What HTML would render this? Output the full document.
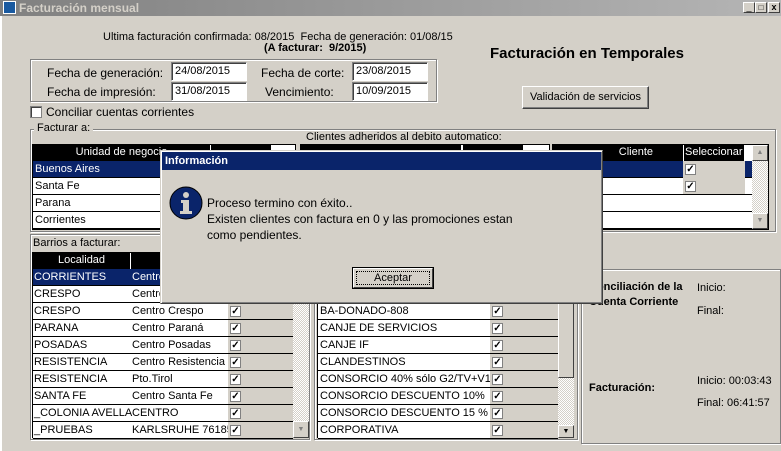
<!DOCTYPE html>
<html><head><meta charset="utf-8"><style>
*{box-sizing:border-box;margin:0;padding:0}
body{width:781px;height:451px;overflow:hidden;background:#d4d0c8;font-family:"Liberation Sans",sans-serif;font-size:11px;color:#000;position:relative}
.a{position:absolute;white-space:nowrap}
.in{background:#fff;border:1px solid;border-color:#808080 #fff #fff #808080;box-shadow:inset 1px 1px 0 #404040;padding:2px 0 0 3px;height:19px;font-size:11px}
.grp{position:absolute;border:1px solid #808080;box-shadow:1px 1px 0 #fff,inset 1px 1px 0 #fff}
.row{position:absolute;height:17px;border-bottom:1px solid #000;background:#fff;font-size:11px;line-height:16px;overflow:hidden}
.sel{background:#0a246a;color:#fff}
.cb{position:absolute;width:11px;height:11px;background:#fff;border:1px solid #808080;font-size:10px;line-height:9px;text-align:center;font-weight:bold}
.sb{position:absolute;background:repeating-conic-gradient(#d4d0c8 0 25%,#fff 0 50%) 0 0/2px 2px}
.btn{position:absolute;border:1px solid;border-color:#fff #404040 #404040 #fff;background:#d4d0c8;text-align:center}
.hd{position:absolute;background:#000;color:#fff;height:16px;line-height:15px;text-align:center}
</style></head><body>
<!-- title bar -->
<div class="a" style="left:0;top:0;width:781px;height:16px;background:linear-gradient(90deg,#808080,#b5b5b5)"></div>
<div class="a" style="left:3px;top:1px;width:13px;height:13px;background:#1a5aa0;border:1px solid #fff"></div>
<div class="a" style="left:19px;top:1px;color:#d4d0c8;font-weight:bold;font-size:12px">Facturación mensual</div>
<div class="btn" style="left:743px;top:2px;width:12px;height:11px;font-size:9px;line-height:8px">_</div>
<div class="btn" style="left:755px;top:2px;width:12px;height:11px;font-size:8px;line-height:9px">□</div>
<div class="btn" style="left:768px;top:2px;width:12px;height:11px;font-size:9px;line-height:9px;font-weight:bold">x</div>
<div class="a" style="left:0;top:16px;width:2px;height:435px;background:#fff"></div>

<div class="a" style="left:103px;top:31px;font-size:11px">Ultima facturación confirmada: 08/2015 &nbsp;Fecha de generación: 01/08/15</div>
<div class="a" style="left:264px;top:42px;font-size:11px;font-weight:bold">(A facturar: &nbsp;9/2015)</div>
<div class="a" style="left:490px;top:45px;font-size:15px;font-weight:bold">Facturación en Temporales</div>

<div class="grp" style="left:30px;top:59px;width:407px;height:43px"></div>
<div class="a" style="left:47px;top:66px;font-size:12px">Fecha de generación:</div>
<div class="a" style="left:47px;top:85px;font-size:12px">Fecha de impresión:</div>
<div class="a" style="left:261px;top:66px;font-size:12px">Fecha de corte:</div>
<div class="a" style="left:265px;top:85px;font-size:12px">Vencimiento:</div>
<div class="a in" style="left:171px;top:62px;width:76px">24/08/2015</div>
<div class="a in" style="left:171px;top:82px;width:76px">31/08/2015</div>
<div class="a in" style="left:352px;top:62px;width:76px">23/08/2015</div>
<div class="a in" style="left:352px;top:82px;width:76px">10/09/2015</div>
<div class="btn" style="left:522px;top:86px;width:127px;height:23px;line-height:21px;font-size:11px;box-shadow:inset -1px -1px 0 #808080">Validación de servicios</div>

<div class="a" style="left:30px;top:106px;width:12px;height:12px;background:#fff;border:1px solid #808080;box-shadow:inset 1px 1px 0 #404040"></div>
<div class="a" style="left:46px;top:105px;font-size:12px">Conciliar cuentas corrientes</div>

<div class="grp" style="left:30px;top:129px;width:746px;height:103px"></div>
<div class="a" style="left:34px;top:122px;background:#d4d0c8;padding:0 3px;font-size:11px">Facturar a:</div>
<div class="a" style="left:306px;top:131px;font-size:11px">Clientes adheridos al debito automatico:</div>

<!-- top-left grid -->
<div class="a" style="left:32px;top:144px;width:264px;height:86px;background:#fff;border:1px solid #000"></div>
<div class="hd" style="left:33px;top:145px;width:177px">Unidad de negocio</div>
<div class="hd" style="left:211px;top:145px;width:60px"></div>
<div class="row sel" style="left:33px;top:161px;width:262px;padding-left:2px">Buenos Aires</div>
<div class="row" style="left:33px;top:178px;width:262px;padding-left:2px">Santa Fe</div>
<div class="row" style="left:33px;top:195px;width:262px;padding-left:2px">Parana</div>
<div class="row" style="left:33px;top:212px;width:262px;padding-left:2px">Corrientes</div>
<div class="a" style="left:300px;top:144px;width:250px;height:86px;background:#fff;border:1px solid #000"></div>
<div class="hd" style="left:301px;top:145px;width:160px"></div>
<div class="hd" style="left:463px;top:145px;width:60px"></div>

<!-- top-right grid -->
<div class="a" style="left:552px;top:144px;width:217px;height:86px;background:#fff;border:1px solid #000"></div>
<div class="hd" style="left:553px;top:145px;width:130px;text-align:right;padding-right:30px">Cliente</div>
<div class="hd" style="left:684px;top:145px;width:60px;text-align:left;padding-left:1px">Seleccionar</div>
<div class="row sel" style="left:553px;top:161px;width:199px"></div>
<div class="a" style="left:683px;top:161px;width:62px;height:17px;background:#d4d0c8"></div>
<div class="cb" style="left:685px;top:164px">✓</div>
<div class="row" style="left:553px;top:178px;width:199px;background:transparent"></div>
<div class="a" style="left:683px;top:178px;width:62px;height:16px;background:#d4d0c8"></div>
<div class="cb" style="left:685px;top:181px">✓</div>
<div class="row" style="left:553px;top:195px;width:199px"></div>
<div class="row" style="left:553px;top:212px;width:199px"></div>
<div class="sb" style="left:752px;top:145px;width:16px;height:84px"></div>
<div class="btn" style="left:752px;top:145px;width:16px;height:16px;font-size:7px;line-height:14px;color:#808080">▲</div>
<div class="btn" style="left:752px;top:213px;width:16px;height:16px;font-size:7px;line-height:14px;color:#808080">▼</div>

<!-- Barrios -->
<div class="grp" style="left:30px;top:234px;width:280px;height:206px"></div>
<div class="a" style="left:33px;top:237px;font-size:11px">Barrios a facturar:</div>
<div class="a" style="left:32px;top:252px;width:262px;height:186px;background:#fff;border:1px solid #000"></div>
<div class="hd" style="left:33px;top:253px;width:97px">Localidad</div>
<div class="hd" style="left:131px;top:253px;width:162px"></div>
<div class="sb" style="left:293px;top:253px;width:16px;height:185px"></div>
<div class="btn" style="left:293px;top:421px;width:16px;height:17px;font-size:7px;line-height:15px;color:#808080">▼</div>

<!-- Middle grid -->
<div class="grp" style="left:314px;top:234px;width:264px;height:206px"></div>
<div class="a" style="left:317px;top:252px;width:241px;height:186px;background:#fff;border:1px solid #000"></div>
<div class="sb" style="left:558px;top:253px;width:16px;height:185px"></div>
<div class="btn" style="left:558px;top:253px;width:16px;height:125px"></div>
<div class="btn" style="left:558px;top:425px;width:16px;height:13px;font-size:7px;line-height:11px">▼</div>

<!-- Right panel -->
<div class="grp" style="left:581px;top:269px;width:200px;height:175px"></div>
<div class="a" style="left:589px;top:280px;font-weight:bold;font-size:11px;line-height:15px">Conciliación de la<br>Cuenta Corriente</div>
<div class="a" style="left:697px;top:282px;font-size:11px">Inicio:</div>
<div class="a" style="left:697px;top:305px;font-size:11px">Final:</div>
<div class="a" style="left:589px;top:382px;font-weight:bold;font-size:11px">Facturación:</div>
<div class="a" style="left:697px;top:375px;font-size:11px">Inicio: 00:03:43</div>
<div class="a" style="left:697px;top:397px;font-size:11px">Final: 06:41:57</div>

<div id="rows"></div>
<script>
var L=[["CORRIENTES","Centro",1],["CRESPO","Centro",0],["CRESPO","Centro Crespo",0],["PARANA","Centro Paraná",0],["POSADAS","Centro Posadas",0],["RESISTENCIA","Centro Resistencia",0],["RESISTENCIA","Pto.Tirol",0],["SANTA FE","Centro Santa Fe",0],["_COLONIA AVELLA","CENTRO",0],["_PRUEBAS","KARLSRUHE 76185",0]];
var M=["","","BA-DONADO-808","CANJE DE SERVICIOS","CANJE IF","CLANDESTINOS","CONSORCIO 40% sólo G2/TV+V1","CONSORCIO DESCUENTO 10%","CONSORCIO DESCUENTO 15 %","CORPORATIVA"];
var h="";
for(var i=0;i<10;i++){var y=269+i*17;
h+='<div class="row'+(L[i][2]?' sel':'')+'" style="left:33px;top:'+y+'px;width:260px"><span class="a" style="left:1px">'+L[i][0]+'</span><span class="a" style="left:99px">'+L[i][1]+'</span></div>';
if(i>=2){h+='<div class="a" style="left:228px;top:'+y+'px;width:65px;height:16px;background:#d4d0c8"></div><div class="cb" style="left:230px;top:'+(y+3)+'px">✓</div>';
h+='<div class="row" style="left:318px;top:'+y+'px;width:240px;padding-left:2px">'+M[i]+'</div><div class="a" style="left:490px;top:'+y+'px;width:68px;height:16px;background:#d4d0c8"></div><div class="cb" style="left:492px;top:'+(y+3)+'px">✓</div>';}}
document.getElementById("rows").innerHTML=h;
</script>

<!-- Dialog -->
<div class="a" style="left:160px;top:150px;width:443px;height:154px;background:#d4d0c8;border:1px solid;border-color:#d4d0c8 #404040 #404040 #d4d0c8;box-shadow:inset 1px 1px 0 #fff,inset -1px -1px 0 #808080"></div>
<div class="a" style="left:162px;top:152px;width:439px;height:18px;background:#0a246a;color:#fff;font-weight:bold;font-size:11px;line-height:18px;padding-left:3px">Información</div>
<svg class="a" style="left:169px;top:186px" width="34" height="34" viewBox="0 0 34 34"><circle cx="17" cy="17" r="16" fill="#0a246a" stroke="#000" stroke-width="1"/><circle cx="17" cy="9" r="3" fill="#d4d0c8"/><path d="M12 14h8v11h3v3H11v-3h3v-8h-2z" fill="#d4d0c8"/></svg>
<div class="a" style="left:207px;top:195px;font-size:12px;line-height:16px">Proceso termino con éxito..<br>Existen clientes con factura en 0 y las promociones estan<br>como pendientes.</div>
<div class="a" style="left:352px;top:267px;width:82px;height:22px;border:1px solid #000;background:#d4d0c8"><div style="position:absolute;left:0;top:0;right:0;bottom:0;border:1px solid;border-color:#fff #404040 #404040 #fff"></div><div style="position:absolute;left:3px;top:3px;right:3px;bottom:3px;border:1px dotted #000;text-align:center;line-height:13px;font-size:11px">Aceptar</div></div>
</body></html>
